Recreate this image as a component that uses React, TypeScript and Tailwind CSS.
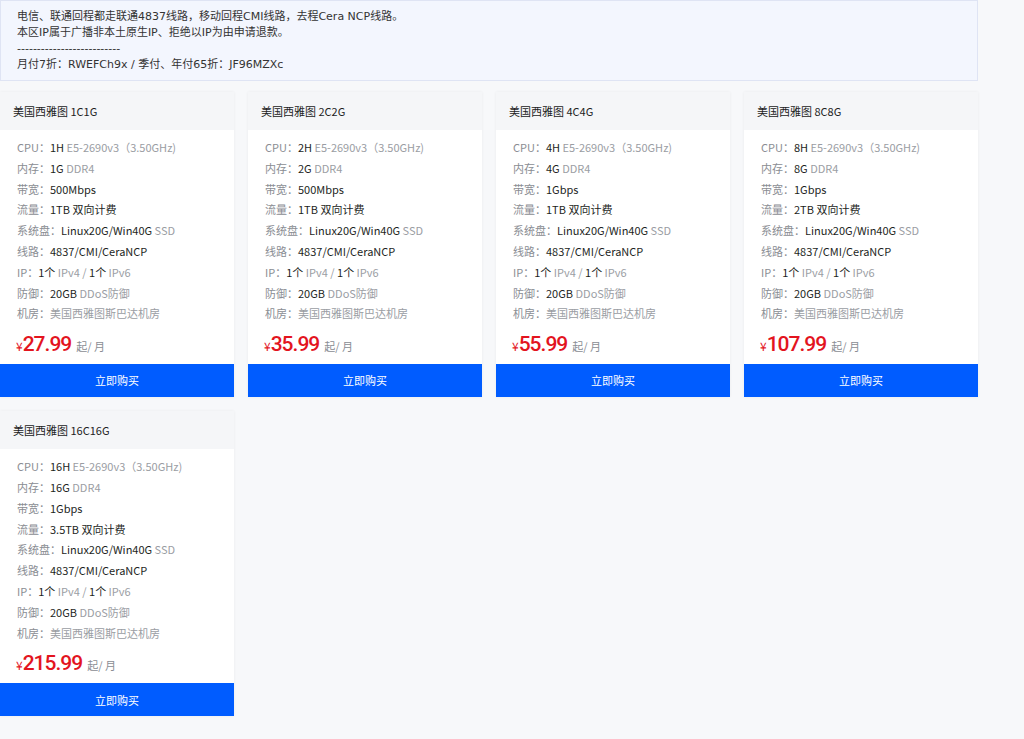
import React from "react";

type Plan = {
  name: string;
  cpu: string;
  ram: string;
  bw: string;
  traffic: string;
  price: string;
};

const plans: Plan[] = [
  { name: "美国西雅图 1C1G", cpu: "1H", ram: "1G", bw: "500Mbps", traffic: "1TB", price: "27.99" },
  { name: "美国西雅图 2C2G", cpu: "2H", ram: "2G", bw: "500Mbps", traffic: "1TB", price: "35.99" },
  { name: "美国西雅图 4C4G", cpu: "4H", ram: "4G", bw: "1Gbps", traffic: "1TB", price: "55.99" },
  { name: "美国西雅图 8C8G", cpu: "8H", ram: "8G", bw: "1Gbps", traffic: "2TB", price: "107.99" },
  { name: "美国西雅图 16C16G", cpu: "16H", ram: "16G", bw: "1Gbps", traffic: "3.5TB", price: "215.99" },
];

const Row = ({ label, value, rest }: { label: string; value?: string; rest?: string }) => (
  <div className="h-[20.8px] leading-[20.8px] whitespace-pre text-[11px]">
    <span className="text-[#8a8d93]">{label}</span>
    {value && <span className="text-[#1d1f23]">{value}</span>}
    {rest && <span className="text-[#9a9da3]">{rest}</span>}
  </div>
);

const Card = ({ p }: { p: Plan }) => (
  <div className="bg-white shadow-[0_0_3px_rgba(0,0,0,0.06)] flex flex-col">
    <div className="h-[38px] bg-[#f5f6f8] flex items-center px-[13px] text-[11px] text-[#222]">
      {p.name}
    </div>
    <div className="px-[17px] pt-[7px]">
      <Row label="CPU：" value={p.cpu} rest=" E5-2690v3（3.50GHz)" />
      <Row label="内存：" value={p.ram} rest=" DDR4" />
      <Row label="带宽：" value={p.bw} />
      <Row label="流量：" value={`${p.traffic} 双向计费`} />
      <Row label="系统盘：" value="Linux20G/Win40G" rest=" SSD" />
      <Row label="线路：" value="4837/CMI/CeraNCP" />
      <div className="h-[20.8px] leading-[20.8px] whitespace-pre text-[11px]">
        <span className="text-[#8a8d93]">IP：</span>
        <span className="text-[#1d1f23]">1个</span>
        <span className="text-[#9a9da3]"> IPv4 / </span>
        <span className="text-[#1d1f23]">1个</span>
        <span className="text-[#9a9da3]"> IPv6</span>
      </div>
      <Row label="防御：" value="20GB" rest=" DDoS防御" />
      <Row label="机房：" rest="美国西雅图斯巴达机房" />
      <div className="flex items-baseline h-[40px] pt-[10px] -ml-[1px]">
        <span className="text-[12px] text-[#e3141e]">¥</span>
        <span className="text-[21px] leading-none tracking-[-1px] text-[#e3141e] font-medium font-['Roboto',sans-serif]">
          {p.price}
        </span>
        <span className="text-[11px] text-[#8a8d93] ml-[5px]">起/ 月</span>
      </div>
    </div>
    <button className="h-[33px] bg-[#005cff] text-white text-[11px] flex items-center justify-center">
      立即购买
    </button>
  </div>
);

export default function App() {
  return (
    <div className="min-h-[739px] bg-[#f7f8fa] font-['Noto_Sans_CJK_SC','Noto_Sans',sans-serif] w-[1024px]">
      <div className="w-[978px] bg-[#f3f6fe] border border-[#dfe4f4] pl-[16px] pt-[8px] pb-[7px] text-[11px] leading-[16px] text-[#333] font-['DejaVu_Sans','Noto_Sans_CJK_SC',sans-serif]">
        <div>电信、联通回程都走联通4837线路，移动回程CMI线路，去程Cera NCP线路。</div>
        <div>本区IP属于广播非本土原生IP、拒绝以IP为由申请退款。</div>
        <div>--------------------------</div>
        <div>月付7折：RWEFCh9x / 季付、年付65折：JF96MZXc</div>
      </div>
      <div className="grid grid-cols-[234px_234px_234px_234px] gap-[14px] mt-[11px]">
        {plans.map((p) => (
          <Card key={p.name} p={p} />
        ))}
      </div>
    </div>
  );
}
